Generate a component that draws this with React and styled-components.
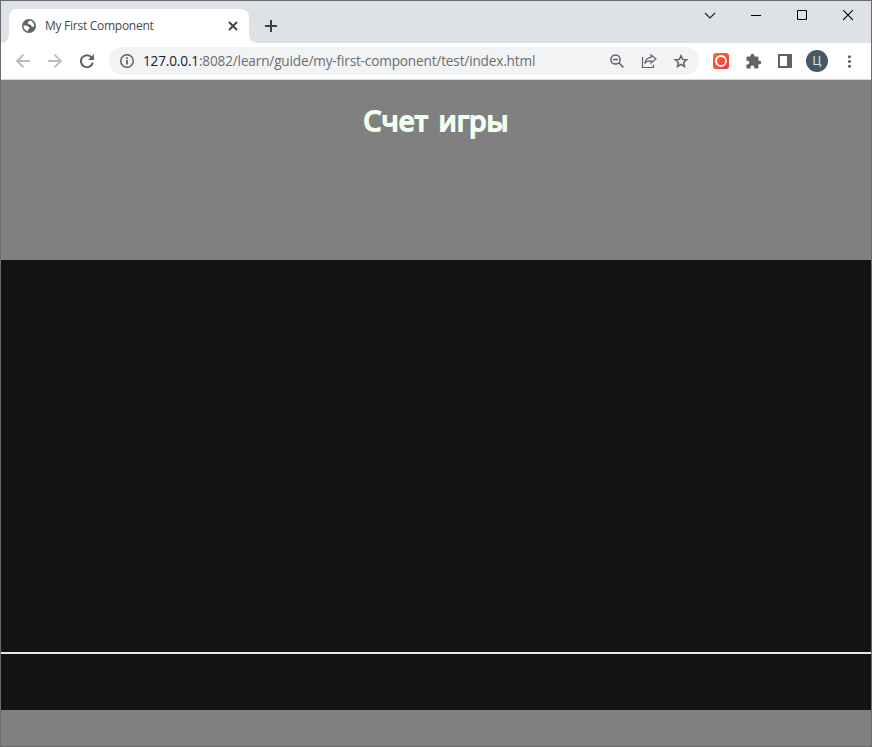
import React from "react";
import styled, { createGlobalStyle } from "styled-components";
import { MdExtension, MdMoreVert } from "react-icons/md";

const GlobalStyle = createGlobalStyle`
  *, *::before, *::after { box-sizing: border-box; }
  body { margin: 0; overflow: hidden; font-family: "Open Sans", "Noto Sans", sans-serif; }
  svg { display: block; flex: none; }
`;

const BrowserWindow = styled.div`
  width: 872px;
  height: 747px;
  border: 1px solid #6b6b6d;
  display: flex;
  flex-direction: column;
  background: #808080;
`;

const TabStrip = styled.header`
  height: 42px;
  flex: none;
  display: flex;
  background: #dee1e6;
  padding-left: 8px;
`;

const Tab = styled.div`
  position: relative;
  width: 240px;
  height: 34px;
  margin-top: 8px;
  padding: 0 10px 0 13px;
  display: flex;
  align-items: center;
  background: #fff;
  color: #5f6368;
  border-radius: 8px 8px 0 0;
  &::before, &::after {
    content: "";
    position: absolute;
    bottom: 0;
    width: 8px;
    height: 8px;
  }
  &::before { left: -8px; background: radial-gradient(circle at 0 0, transparent 7.5px, #fff 8px); }
  &::after { right: -8px; background: radial-gradient(circle at 100% 0, transparent 7.5px, #fff 8px); }
`;

const TabTitle = styled.span`
  flex: 1;
  margin-left: 9px;
  font-size: 12px;
  line-height: 16px;
  letter-spacing: ${(p) => p.$tracking}px;
  color: #45494d;
  white-space: nowrap;
`;

const NewTab = styled.div`
  width: 28px;
  height: 28px;
  margin: 11px 0 0 8px;
  display: grid;
  place-items: center;
`;

const WindowControls = styled.div`
  display: flex;
  margin-left: auto;
  height: 29px;
`;

const Control = styled.div`
  width: 46px;
  display: grid;
  place-items: center;
`;

const Toolbar = styled.nav`
  height: 37px;
  flex: none;
  display: flex;
  align-items: center;
  background: #fff;
  border-bottom: 1px solid #d5d6d8;
  color: #5f6368;
`;

const NavButton = styled.div`
  width: 32px;
  height: 32px;
  display: grid;
  place-items: center;
  color: ${(p) => (p.$disabled ? "#babcbe" : "#5f6368")};
`;

const NavGroup = styled.div`
  display: flex;
  padding-left: 6px;
  width: 108px;
`;

const AddressBar = styled.div`
  width: 590px;
  height: 28px;
  padding: 0 2px 0 11px;
  border-radius: 14px;
  background: #f1f3f4;
  display: flex;
  align-items: center;
`;

const Address = styled.span`
  flex: 1;
  margin-left: 9px;
  font-size: 13.6px;
  line-height: 20px;
  letter-spacing: ${(p) => p.$tracking}px;
  white-space: nowrap;
  color: #6b6e72;
`;

const Host = styled.span`
  color: #202124;
`;

const IconCell = styled.div`
  width: 32px;
  height: 28px;
  display: grid;
  place-items: center;
`;

const Extensions = styled.div`
  display: flex;
  margin-left: 6px;
`;

const Recorder = styled.div`
  width: 16px;
  height: 16px;
  border-radius: 3px;
  background: linear-gradient(135deg, #ff6b36, #fb3038);
  display: grid;
  place-items: center;
  &::before {
    content: "";
    width: 12px;
    height: 12px;
    border: 2px solid #fff;
    border-radius: 50%;
  }
`;

const Avatar = styled.div`
  width: 22px;
  height: 22px;
  border-radius: 50%;
  background: #455a64;
  color: #dce3e6;
  font: 12px/22px Roboto, sans-serif;
  text-align: center;
`;

const Page = styled.main`
  flex: 1;
  display: flex;
  flex-direction: column;
  background: #808080;
`;

const ScoreHeader = styled.section`
  height: 180px;
  padding-top: 19px;
  text-align: center;
`;

const ScoreTitle = styled.h1`
  margin: 0;
  font: 400 28px/42px "Open Sans", "Noto Sans", sans-serif;
  letter-spacing: 0.3px;
  word-spacing: 3px;
  color: #f0fff0;
  -webkit-text-stroke: 2px #f0fff0;
  stroke-linejoin: round;
`;

const Board = styled.section`
  height: 450px;
  padding-top: 392px;
  background: #131313;
`;

const Divider = styled.hr`
  margin: 0;
  border: 0;
  height: 2px;
  background: #e9e9e5;
`;

export default function App() {
  return (
    <>
      <GlobalStyle />
      <BrowserWindow>
        <TabStrip>
          <Tab>
            <svg width="14" height="14" viewBox="0 0 14 14">
              <circle cx="7" cy="7" r="7" fill="#5f6368" />
              <path d="M7.6 1.5C7.4 2.7 5.9 2.6 5.7 3.8c-.1.9.9.9 1.2 1.5.3.7 1.5.2 2.1.8.5.6.1 1.3.9 1.6.8.3 1.6-.2 2.3-.1.2-3.1-1.9-5.8-4.6-6.1zM1.6 6.600c1.5.1 3-.1 4.2.5.8.4.6 1.3 1.5 1.5.9.2.5 1.4-.4 1.4-.7 0-.8.8-.8 2.3C3.200 11.800 1.300 9.400 1.600 6.600z" fill="#fff" />
            </svg>
            <TabTitle $tracking={-0.27}>My First Component</TabTitle>
            <svg width="12" height="12" viewBox="0 0 12 12" fill="none" stroke="#3c4043" strokeWidth="1.8">
              <path d="M2 2l8 8M10 2l-8 8" />
            </svg>
          </Tab>
          <NewTab>
            <svg width="12" height="12" viewBox="0 0 12 12" fill="#3c4043">
              <path d="M5 0h2v5h5v2H7v5H5V7H0V5h5z" />
            </svg>
          </NewTab>
          <WindowControls>
            <Control>
              <svg width="12" height="8" viewBox="0 0 12 8" fill="none" stroke="#222" strokeWidth="1.1">
                <path d="M1 1l5 5 5-5" />
              </svg>
            </Control>
            <Control>
              <svg width="10" height="11" viewBox="0 0 10 11" fill="#000">
                <path d="M0 5h10v1H0z" />
              </svg>
            </Control>
            <Control>
              <svg width="10" height="11" viewBox="0 0 10 11" fill="none" stroke="#000">
                <path d="M.5 .5h9v9h-9z" />
              </svg>
            </Control>
            <Control>
              <svg width="10" height="11" viewBox="0 0 10 11" fill="none" stroke="#000" strokeWidth="1.1">
                <path d="M0 0l10 10M10 0l-10 10" />
              </svg>
            </Control>
          </WindowControls>
        </TabStrip>
        <Toolbar>
          <NavGroup>
            <NavButton $disabled>
              <svg width="14" height="14" viewBox="0 0 14 14" fill="none" stroke="currentColor" strokeWidth="1.9">
                <path d="M14 7H1.500M7.500 .7L1.200 7l6.300 6.300" />
              </svg>
            </NavButton>
            <NavButton $disabled>
              <svg width="14" height="14" viewBox="0 0 14 14" fill="none" stroke="currentColor" strokeWidth="1.9">
                <path d="M0 7h12.500M6.500 .7L12.800 7l-6.300 6.300" />
              </svg>
            </NavButton>
            <NavButton>
              <svg width="14" height="14" viewBox="0 0 14 14" fill="none" stroke="currentColor" strokeWidth="2">
                <path d="M11.700 3.500A6 6 0 1 0 12.800 8.500" />
                <path d="M14 0v6H8z" fill="currentColor" stroke="none" />
              </svg>
            </NavButton>
          </NavGroup>
          <AddressBar>
            <svg width="14" height="14" viewBox="0 0 14 14" fill="none" stroke="#5f6368">
              <circle cx="7" cy="7" r="6.25" strokeWidth="1.5" />
              <path d="M7 6v4.5M7 3.3v1.7" strokeWidth="1.8" />
            </svg>
            <Address $tracking={-0.16}><Host>127.0.0.1</Host>:8082/learn/guide/my-first-component/test/index.html</Address>
            <IconCell>
              <svg width="14" height="14" viewBox="0 0 14 14" fill="none" stroke="#5f6368" strokeWidth="1.5">
                <circle cx="5.5" cy="5.500" r="4.600" />
                <path d="M3 5.500h5M8.800 8.800l4.600 4.600" />
              </svg>
            </IconCell>
            <IconCell>
              <svg width="16" height="16" viewBox="0 0 16 16" fill="none" stroke="#5f6368" strokeWidth="1.2">
                <path d="M1.500 4v10.500h11V12M10 2l5 4-5 4V7.800C7 7.800 5 8.600 3.800 10.500c.4-3.500 2.400-5.700 6.200-6.100z" />
              </svg>
            </IconCell>
            <IconCell>
              <svg width="14" height="14" viewBox="0 0 14 14" fill="none" stroke="#5f6368" strokeWidth="1.5">
                <path d="M7 1.700l1.600 3.700 4 .35-3 2.700.9 3.950L7 10.300l-3.500 2.100.9-3.950-3-2.700 4-.35z" />
              </svg>
            </IconCell>
          </AddressBar>
          <Extensions>
            <IconCell><Recorder /></IconCell>
            <IconCell><MdExtension size={17} /></IconCell>
            <IconCell>
              <svg width="14" height="14" viewBox="0 0 14 14" fill="#5f6368" fillRule="evenodd">
                <path d="M0 0h14v14H0zM2 2v10h7V2z" />
              </svg>
            </IconCell>
            <IconCell><Avatar>Ц</Avatar></IconCell>
            <IconCell><MdMoreVert size={19} /></IconCell>
          </Extensions>
        </Toolbar>
        <Page>
          <ScoreHeader><ScoreTitle>Счет игры</ScoreTitle></ScoreHeader>
          <Board><Divider /></Board>
        </Page>
      </BrowserWindow>
    </>
  );
}
